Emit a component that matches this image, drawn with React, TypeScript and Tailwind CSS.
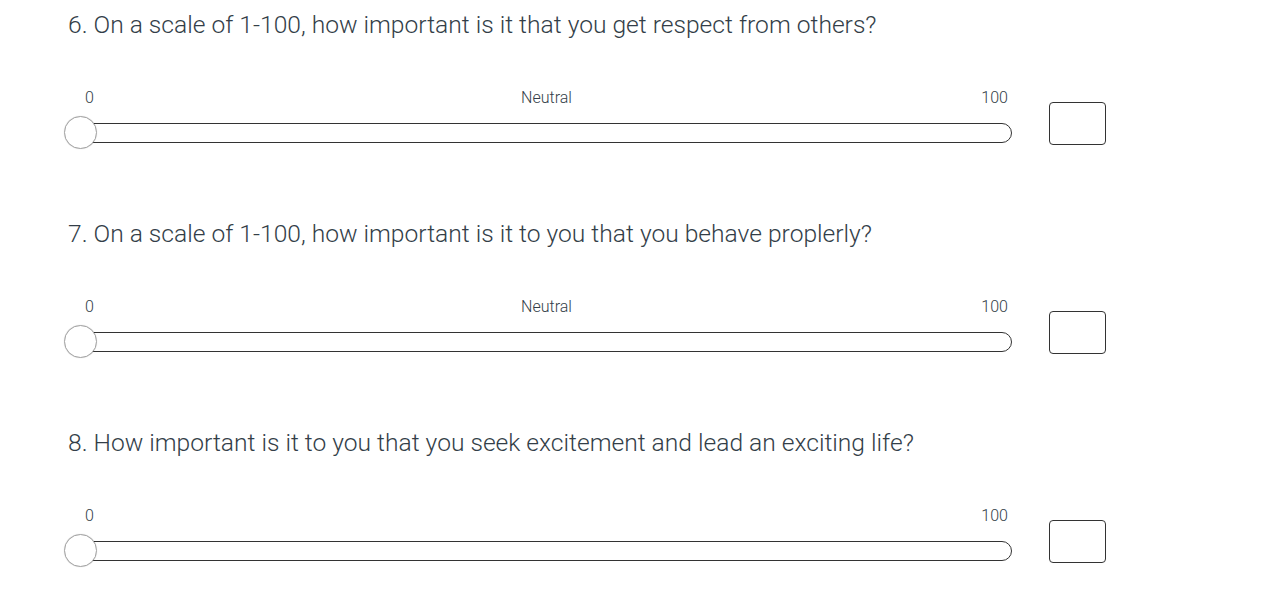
import React from 'react';

type Question = {
  title: string;
  neutral: boolean;
};

const questions: Question[] = [
  { title: '6. On a scale of 1-100, how important is it that you get respect from others?', neutral: true },
  { title: '7. On a scale of 1-100, how important is it to you that you behave proplerly?', neutral: true },
  { title: '8. How important is it to you that you seek excitement and lead an exciting life?', neutral: false },
];

const SliderQuestion: React.FC<{ q: Question }> = ({ q }) => {
  return (
    <div className="flex h-[209px] flex-col pt-[10px]">
      <h2 className="pl-[68px] text-[24.6px] leading-[30px] font-light text-[#333e48]">{q.title}</h2>

      <div className="mt-[47px] flex items-start gap-[37px] pl-[64px]">
        <div className="flex w-[948px] flex-col gap-[9px]">
          {/* labels */}
          <div className="grid h-[20px] grid-cols-3 pl-[21px] pr-[4px] text-[16px] leading-[22px] font-light text-[#333e48]">
            <span className="justify-self-start">0</span>
            <span className="justify-self-center">{q.neutral ? 'Neutral' : ''}</span>
            <span className="justify-self-end">100</span>
          </div>

          {/* track with thumb */}
          <div className="flex items-center">
            <div className="relative z-10 h-[33px] w-[33px] shrink-0 rounded-full border-[1.5px] border-[#a3a3a3] bg-white shadow-[0_0_1px_rgba(0,0,0,0.2)]" />
            <div className="-ml-[17px] h-[20px] flex-1 rounded-r-full border border-[#333] bg-white" />
          </div>
        </div>

        <div className="mt-[15px] h-[43px] w-[57px] rounded-[4px] border border-[#333] bg-white" />
      </div>
    </div>
  );
};

export default function App() {
  return (
    <div
      className="h-[608px] w-[1281px] overflow-hidden bg-white"
      style={{ fontFamily: 'Roboto, Lato, "Liberation Sans", sans-serif' }}
    >
      {questions.map((q, i) => (
        <SliderQuestion key={i} q={q} />
      ))}
    </div>
  );
}
